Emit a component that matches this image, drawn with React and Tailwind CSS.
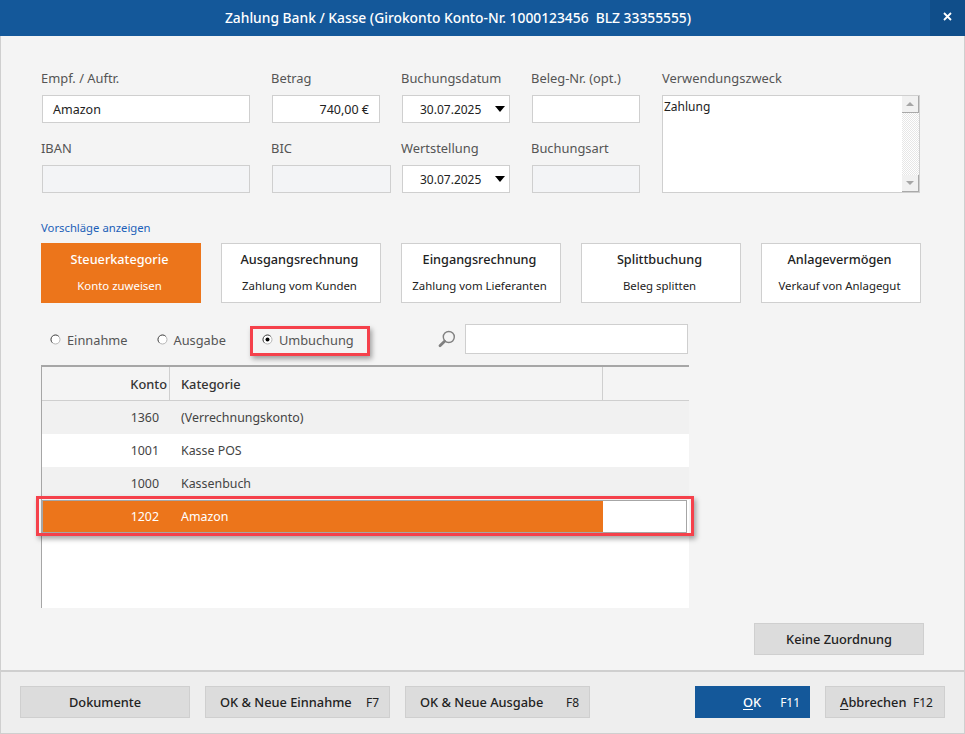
import React from "react";

function Label({ children, className = "" }) {
  return <div className={"self-end -ml-px pb-[8px] text-[12.9px] leading-[18px] text-[#555555] " + className}>{children}</div>;
}

function Box({ children, className = "" }) {
  return <div className={"h-[28px] border border-[#cfcfcf] flex items-center pt-[2px] text-[12.5px] text-[#222222] " + className}>{children}</div>;
}

function DateBox() {
  return (
    <Box className="bg-white pl-[17px] relative text-[12px]">
      30.07.2025
      <span className="absolute right-[4px] top-[10px] w-0 h-0 border-x-[5px] border-x-transparent border-t-[6px] border-t-black" />
    </Box>
  );
}

function Tab({ title, sub, active }) {
  return (
    <div className={"w-[160px] h-[60px] pr-[3px] flex flex-col items-center text-[11.4px] " + (active ? "bg-[#ec751b] text-white" : "bg-white border border-[#cfcfcf] text-[#222222]")}>
      <div className={"text-[12.7px] font-medium leading-[18px] " + (active ? "mt-[7px]" : "mt-[6px]")}>{title}</div>
      <div className="mt-[10px] leading-[16px]">{sub}</div>
    </div>
  );
}

function Radio({ label, checked }) {
  return (
    <div className="flex items-center text-[12.8px] text-[#555555] leading-[18px]">
      <svg width="11" height="11" viewBox="0 0 11 11" className="mr-[6px]">
        <circle cx="5.5" cy="5.5" r="4.5" fill="#ffffff" stroke="#b5b5b5" />
        <path d="M2.3 8.7A4.5 4.5 0 0 1 8.7 2.3" fill="none" stroke="#555555" />
        {checked && <circle cx="5.5" cy="5.5" r="2" fill="#000000" />}
      </svg>
      {label}
    </div>
  );
}

function Row({ konto, name, striped }) {
  return (
    <div className={"grid grid-cols-[127px_433px_86px] h-[33px] pt-px items-center text-[12.4px] text-[#444444] " + (striped ? "bg-[#f1f1f1]" : "bg-white")}>
      <div className="text-right pr-[10px]">{konto}</div>
      <div className="pl-[12px]">{name}</div>
    </div>
  );
}

function Btn({ children, className = "" }) {
  return (
    <div className={"h-[32px] flex items-center pt-px bg-[#dcdcdc] border border-[#cfcfcf] text-[12.8px] font-medium text-[#222222] " + className}>{children}</div>
  );
}

export default function App() {
  return (
    <div className="w-[965px] h-[734px] flex flex-col bg-[#f4f4f4] font-['Noto_Sans',sans-serif] overflow-hidden">
      <div className="h-[36px] shrink-0 bg-[#14589a] flex items-center text-white">
        <div className="flex-1 text-center text-[13.8px] font-medium pr-[14px]">Zahlung Bank / Kasse (Girokonto Konto-Nr. 1000123456&nbsp; BLZ 33355555)</div>
        <div className="w-[35px] h-[36px] bg-[#104e8a] flex items-center justify-center pb-[3px]">
          <svg width="9" height="9" viewBox="0 0 9 9"><path d="M1 1L8 8M8 1L1 8" stroke="#ffffff" strokeWidth="1.8" /></svg>
        </div>
      </div>

      <div className="flex-1 flex flex-col border-x border-[#cfcfcf] pl-[40px] pt-[32px] min-h-0">
        <div className="ml-px grid grid-cols-[208px_108px_108px_108px_258px] grid-rows-[27px_28px_42px_28px] gap-x-[22px]">
          <Label>Empf. / Auftr.</Label>
          <Label>Betrag</Label>
          <Label>Buchungsdatum</Label>
          <Label>Beleg-Nr. (opt.)</Label>
          <Label className="ml-0 text-[12.6px]">Verwendungszweck</Label>

          <Box className="bg-white pl-[10px]">Amazon</Box>
          <Box className="bg-white justify-end pr-[10px]">740,00 €</Box>
          <DateBox />
          <Box className="bg-white" />
          <div className="row-span-3 border border-[#cfcfcf] bg-white relative text-[12px] leading-[18px] text-[#222222] pl-[1px] pt-[2px]">
            Zahlung
            <div className="absolute right-0 top-0 bottom-0 w-[17px] flex flex-col">
              <div className="h-[17px] bg-[#f1f1f1] border-b border-r border-[#a9a9a9] flex items-center justify-center">
                <span className="w-0 h-0 border-x-[4px] border-x-transparent border-b-[4px] border-b-[#a6a6a6]" />
              </div>
              <div className="flex-1 bg-[repeating-conic-gradient(#e6e6e6_0_25%,#ffffff_0_50%)] bg-[length:2px_2px]" />
              <div className="h-[17px] bg-[#f1f1f1] border-b border-r border-[#a9a9a9] flex items-center justify-center">
                <span className="w-0 h-0 border-x-[4px] border-x-transparent border-t-[4px] border-t-[#a6a6a6]" />
              </div>
            </div>
          </div>

          <Label>IBAN</Label>
          <Label>BIC</Label>
          <Label>Wertstellung</Label>
          <Label className="col-start-4">Buchungsart</Label>

          <Box className="bg-[#f3f4f6]" />
          <Box className="bg-[#f3f4f6] w-[119px]" />
          <DateBox />
          <Box className="bg-[#f3f4f6]" />
        </div>

        <div className="mt-[27px] h-[16px] text-[11.3px] leading-[16px] text-[#1c5fb8]">Vorschläge anzeigen</div>

        <div className="mt-[7px] flex gap-[20px]">
          <Tab active title="Steuerkategorie" sub="Konto zuweisen" />
          <Tab title="Ausgangsrechnung" sub="Zahlung vom Kunden" />
          <Tab title="Eingangsrechnung" sub="Zahlung vom Lieferanten" />
          <Tab title="Splittbuchung" sub="Beleg splitten" />
          <Tab title="Anlagevermögen" sub="Verkauf von Anlagegut" />
        </div>

        <div className="mt-[21px] h-[30px] flex items-center w-[647px]">
          <div className="ml-[9px] pt-px"><Radio label="Einnahme" /></div>
          <div className="ml-[29px] pt-px"><Radio label="Ausgabe" /></div>
          <div className="ml-[24px] h-[30px] w-[120px] mt-[3px] pb-[2px] border-[3px] border-[#f5414b] shadow-[2px_3px_5px_rgba(0,0,0,0.35)] pl-[9px] flex items-center"><Radio checked label="Umbuchung" /></div>
          <svg width="18" height="18" viewBox="0 0 18 18" className="ml-[68px]">
            <circle cx="10.8" cy="7" r="5.5" fill="none" stroke="#808080" strokeWidth="1.4" />
            <path d="M6.6 11.2L2 15.8" stroke="#808080" strokeWidth="2.8" strokeLinecap="round" />
          </svg>
          <div className="ml-[9px] flex-1 h-[30px] border border-[#cfcfcf] bg-white" />
        </div>

        <div className="mt-[11px] w-[648px] h-[243px] relative bg-white border-l border-[#a6a6a6] border-t-2 border-t-[#a6a6a6]">
          <div className="grid grid-cols-[128px_433px_86px] h-[34px] bg-[#f4f4f4] border-b border-[#cfcfcf] text-[12.8px] font-medium text-[#333333] items-center">
            <div className="h-full flex items-center justify-end pt-[2px] pr-[2px] border-r border-[#cfcfcf]">Konto</div>
            <div className="h-full flex items-center pt-[2px] pl-[11px] border-r border-[#cfcfcf]">Kategorie</div>
            <div />
          </div>
          <Row striped konto="1360" name="(Verrechnungskonto)" />
          <Row konto="1001" name="Kasse POS" />
          <Row striped konto="1000" name="Kassenbuch" />
          <div className="grid grid-cols-[560px_83px] h-[33px] w-[645px] border border-[#a6a6a6] text-[12.4px] text-white">
            <div className="grid grid-cols-[126px_434px] items-center pt-px bg-[#ec751b]">
              <div className="text-right pr-[10px]">1202</div>
              <div className="pl-[12px]">Amazon</div>
            </div>
            <div className="bg-white" />
          </div>
          <div className="absolute left-[-6px] top-[129px] w-[658px] h-[40px] border-[3px] border-[#f5414b] shadow-[2px_3px_5px_rgba(0,0,0,0.35)]" />
        </div>

        <div className="mt-[15px] ml-[713px] w-[170px]">
          <Btn className="justify-center">Keine Zuordnung</Btn>
        </div>
      </div>

      <div className="h-[64px] shrink-0 bg-[#eeeeee] border border-t-2 border-[#cfcfcf] pt-[14px] pl-[19px] flex">
        <Btn className="w-[170px] justify-center">Dokumente</Btn>
        <Btn className="ml-[15px] w-[185px] pl-[14px] justify-between pr-[10px]"><span>OK &amp; Neue Einnahme</span><span className="text-[12px] font-normal">F7</span></Btn>
        <Btn className="ml-[15px] w-[185px] pl-[14px] justify-between pr-[10px]"><span>OK &amp; Neue Ausgabe</span><span className="text-[12px] font-normal">F8</span></Btn>
        <div className="ml-[105px] w-[115px] h-[32px] pt-px bg-[#14589a] text-white text-[12.8px] flex items-center">
          <span className="ml-[48px] font-medium"><span className="underline underline-offset-2">O</span>K</span>
          <span className="ml-[19px] text-[12px]">F11</span>
        </div>
        <Btn className="ml-[15px] w-[120px] pl-[14px] justify-between pr-[11px]"><span><span className="underline underline-offset-2">A</span>bbrechen</span><span className="text-[12px] font-normal">F12</span></Btn>
      </div>
    </div>
  );
}
